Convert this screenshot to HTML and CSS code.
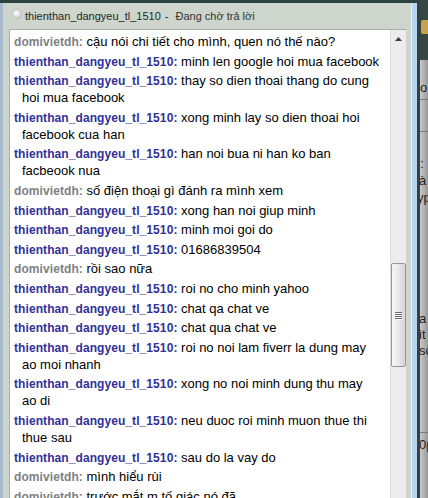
FILE: index.html
```
<!DOCTYPE html>
<html lang="vi">
<head>
<meta charset="utf-8">
<title>Chat</title>
<link rel="stylesheet" href="styles.css">
</head>
<body>
<div class="desktop">
  <div class="win">
    <div class="titlebar">
      <span class="status-dot"></span>
      <span class="t-name">thienthan_dangyeu_tl_1510</span>
      <span class="t-sep">-</span>
      <span class="t-status">Đang chờ trả lời</span>
    </div>
    <div class="pane">
      <div class="chat">
        <p class="msg"><b class="me">domivietdh:</b> cậu nói chi tiết cho mình, quen nó thế nào?</p>
        <p class="msg"><b class="them">thienthan_dangyeu_tl_1510:</b> minh len google hoi mua facebook</p>
        <p class="msg"><b class="them">thienthan_dangyeu_tl_1510:</b> thay so dien thoai thang do cung<br>hoi mua facebook</p>
        <p class="msg"><b class="them">thienthan_dangyeu_tl_1510:</b> xong minh lay so dien thoai hoi<br>facebook cua han</p>
        <p class="msg"><b class="them">thienthan_dangyeu_tl_1510:</b> han noi bua ni han ko ban<br>facbeook nua</p>
        <p class="msg"><b class="me">domivietdh:</b> số điện thoại gì đánh ra mình xem</p>
        <p class="msg"><b class="them">thienthan_dangyeu_tl_1510:</b> xong han noi giup minh</p>
        <p class="msg"><b class="them">thienthan_dangyeu_tl_1510:</b> minh moi goi do</p>
        <p class="msg"><b class="them">thienthan_dangyeu_tl_1510:</b> 01686839504</p>
        <p class="msg"><b class="me">domivietdh:</b> rồi sao nữa</p>
        <p class="msg"><b class="them">thienthan_dangyeu_tl_1510:</b> roi no cho minh yahoo</p>
        <p class="msg"><b class="them">thienthan_dangyeu_tl_1510:</b> chat qa chat ve</p>
        <p class="msg"><b class="them">thienthan_dangyeu_tl_1510:</b> chat qua chat ve</p>
        <p class="msg"><b class="them">thienthan_dangyeu_tl_1510:</b> roi no noi lam fiverr la dung may<br>ao moi nhanh</p>
        <p class="msg"><b class="them">thienthan_dangyeu_tl_1510:</b> xong no noi minh dung thu may<br>ao di</p>
        <p class="msg"><b class="them">thienthan_dangyeu_tl_1510:</b> neu duoc roi minh muon thue thi<br>thue sau</p>
        <p class="msg"><b class="them">thienthan_dangyeu_tl_1510:</b> sau do la vay do</p>
        <p class="msg"><b class="me">domivietdh:</b> mình hiểu rùi</p>
        <p class="msg"><b class="me">domivietdh:</b> trước mắt m tố giác nó đã</p>
      </div>
      <div class="sb">
        <div class="sb-up">
          <svg width="7" height="4" viewBox="0 0 7 4"><path d="M3.5 0 L7 4 L0 4 Z" fill="#3c3c3c"/></svg>
        </div>
        <div class="sb-track"></div>
        <div class="sb-thumb">
          <div class="grip">
            <span></span><span></span><span></span><span></span>
          </div>
        </div>
      </div>
    </div>
  </div>
  <div class="side">
    <div class="side-blue"></div>
    <div class="side-dark"></div>
    <div class="peek">
      <div class="peek-top">
        <div class="folder"></div>
      </div>
      <div class="peek-body">
        <div class="frag f-lo">lo</div>
        <div class="rule r1"></div>
        <div class="rule r2"></div>
        <div class="frag f-r">r:</div>
        <div class="frag f-a">à</div>
        <div class="frag f-yp">yp</div>
        <div class="frag f-a2">a</div>
        <div class="frag f-it">it</div>
        <div class="frag f-sc">sc</div>
        <div class="rule r3"></div>
        <div class="frag f-0p">0p</div>
      </div>
    </div>
  </div>
</div>
</body>
</html>
```
FILE: styles.css
```
html, body {
  margin: 0;
  padding: 0;
}
body {
  width: 428px;
  height: 498px;
  overflow: hidden;
  background: #2d4341;
  font-family: "Liberation Sans", Arial, sans-serif;
}
.desktop {
  display: flex;
  width: 428px;
  height: 498px;
  overflow: hidden;
}
.win {
  width: 412px;
  box-sizing: border-box;
  margin-top: 3px;
  background: #cdd5cc;
  border-left: 3px solid #a9bccf;
  border-right: 1px solid #eef2ee;
  display: flex;
  flex-direction: column;
  flex-shrink: 0;
}
.titlebar {
  height: 26px;
  display: flex;
  align-items: center;
  padding-left: 10px;
  font-size: 11px;
  color: #262626;
  white-space: nowrap;
}
.status-dot {
  width: 8px;
  height: 8px;
  border-radius: 50%;
  background: radial-gradient(circle at 40% 35%, #ffffff 0%, #e6e6e6 40%, #b2b2b2 100%);
  box-shadow: 0 0 0 0.5px #a8a8a8;
  margin-right: 4px;
  align-self: flex-start;
  margin-top: 7px;
}
.t-sep {
  margin: 0 7px 0 4px;
}
.t-status {
  color: #333;
}
.pane {
  flex: 1;
  display: flex;
  margin-left: 6px;
  margin-right: 5px;
  border-top: 1px solid #a9aea9;
  border-left: 1px solid #a9aea9;
  min-height: 0;
  overflow: hidden;
}
.chat {
  flex: 1;
  background: #ffffff;
  padding: 3px 4px 0 4px;
  overflow: hidden;
}
.msg {
  margin: 0 0 2.6px 0;
  padding-left: 8px;
  text-indent: -8px;
  font-size: 13px;
  line-height: 17px;
  height: auto;
  color: #000;
  white-space: nowrap;
}
.msg b {
  font-size: 12px;
  line-height: 1;
  font-weight: bold;
  letter-spacing: 0.08px;
}
.me {
  color: #808080;
}
.them {
  color: #313199;
}
.sb {
  width: 15px;
  border-left: 1px solid #dcdcdc;
  background: #ececec;
  display: flex;
  flex-direction: column;
  flex-shrink: 0;
}
.sb-up {
  height: 17px;
  display: flex;
  align-items: center;
  justify-content: center;
}
.sb-track {
  height: 216px;
}
.sb-thumb {
  height: 102px;
  border: 1px solid #989898;
  border-radius: 2px;
  background: linear-gradient(to right, #f7f7f7 0%, #eaeaea 45%, #d4d4d4 100%);
  display: flex;
  align-items: center;
  justify-content: center;
}
.grip {
  display: flex;
  flex-direction: column;
  gap: 1px;
}
.grip span {
  display: block;
  width: 7px;
  height: 1px;
  background: #6a6a6a;
  border-bottom: 1px solid #fafafa;
  box-sizing: content-box;
  margin-bottom: -1px;
}
.side {
  flex: 1;
  display: flex;
}
.side-blue {
  width: 5px;
  background: #b6d5ef;
  margin-top: 3px;
}
.side-dark {
  width: 3px;
  background: #3b3e3e;
}
.peek {
  flex: 1;
  display: flex;
  flex-direction: column;
  overflow: hidden;
}
.peek-top {
  height: 60px;
  background: #364846;
  padding-top: 20px;
  box-sizing: border-box;
}
.folder {
  width: 8px;
  height: 14px;
  background: #c8a24a;
  border-radius: 2px 0 0 2px;
  margin-left: 1px;
}
.peek-body {
  flex: 1;
  background: linear-gradient(to right, #c9c9c9 0%, #9a9a9a 60%, #6c6c6c 100%);
  font-size: 13px;
  line-height: 15px;
  color: #1e1e1e;
  white-space: nowrap;
}
.frag {
  margin-left: -1px;
}
.f-lo { margin-top: 20px; margin-left: -3px; }
.rule {
  height: 1px;
  background: #7d7d7d;
}
.r1 { margin-top: 4px; }
.r2 { margin-top: 31px; }
.f-r { margin-top: 24px; margin-left: -4px; }
.f-a { margin-top: 2px; }
.f-yp { margin-top: 2px; margin-left: -3px; }
.f-a2 { margin-top: 106px; }
.f-it { margin-top: 1px; }
.f-sc { margin-top: 1px; }
.r3 { margin-top: 74px; }
.f-0p { margin-top: 4px; }
```
